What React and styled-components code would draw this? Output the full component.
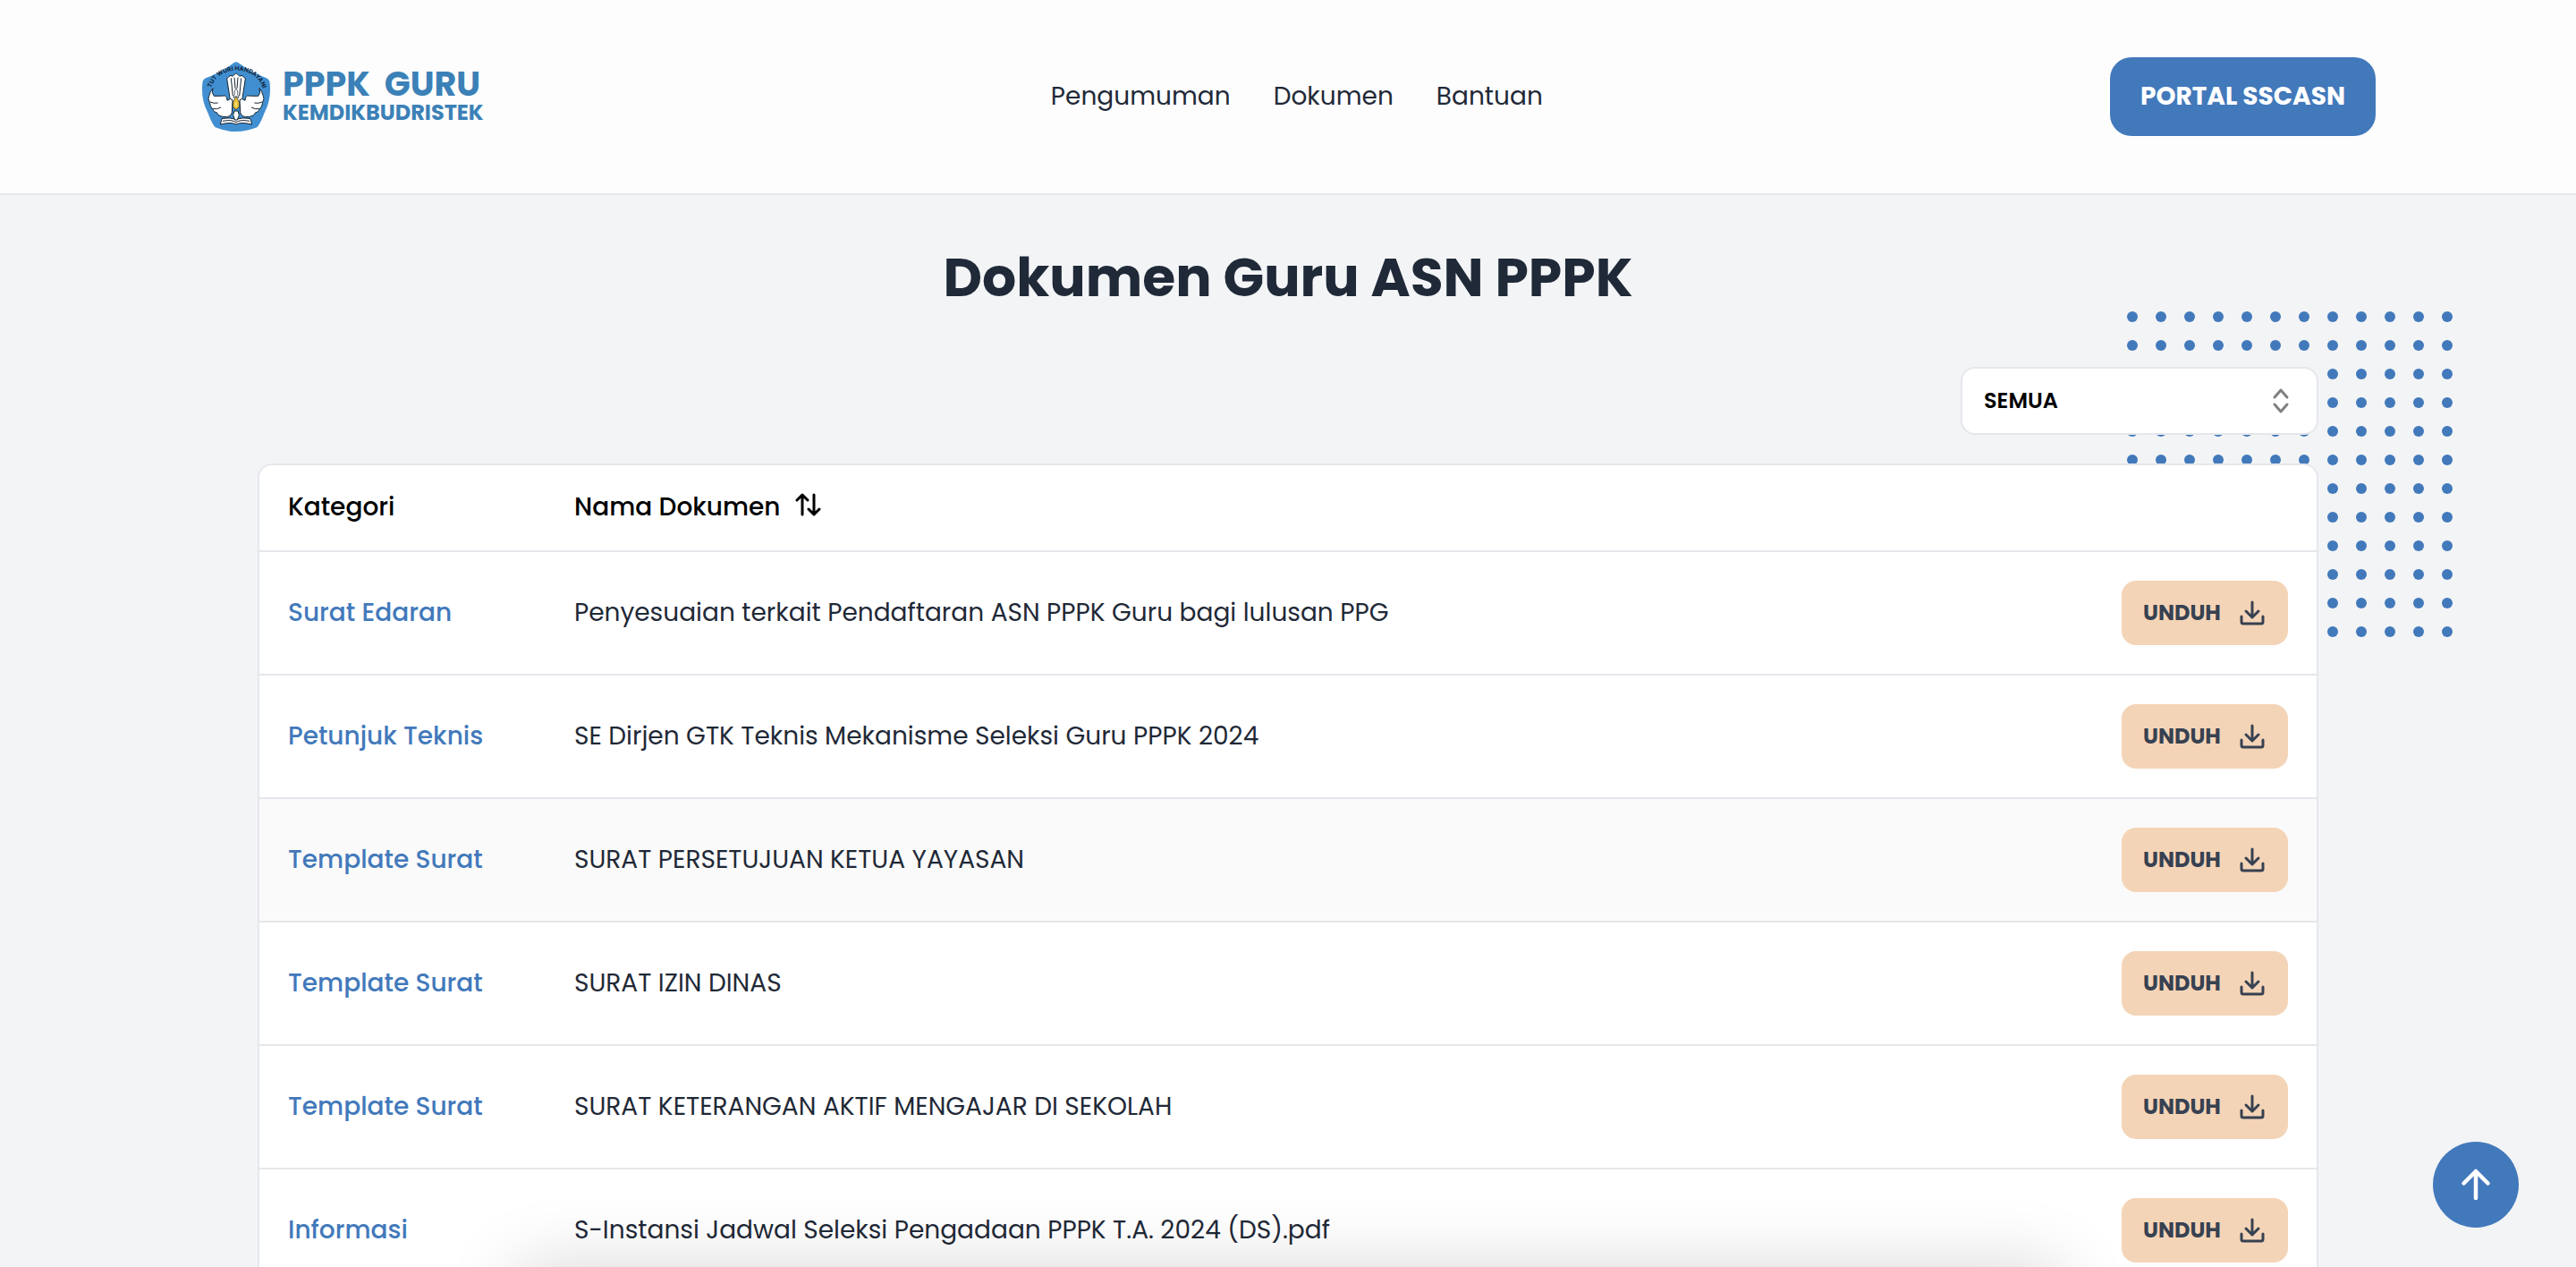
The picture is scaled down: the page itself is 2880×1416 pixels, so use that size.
import React, { useState } from 'react';
import styled, { createGlobalStyle } from 'styled-components';

const GlobalStyle = createGlobalStyle`
  * { box-sizing: border-box; }
  body {
    margin: 0;
    background: #f3f4f6;
    color: #1f2937;
    font-family: Poppins, Inter, "Liberation Sans", sans-serif;
    font-size: 28px;
    line-height: 40px;
  }
  button, select { font: inherit; }
`;

const Header = styled.header`
  display: flex;
  align-items: center;
  justify-content: space-between;
  padding: 64px 224px;
  background: #fdfdfd;
  border-bottom: 2px solid #e5e7eb;
`;

const Brand = styled.a`
  display: flex;
  align-items: center;
  gap: 12px;
  color: #3b81b7;
  text-decoration: none;
  font-weight: 700;
`;

const BrandText = styled.span`
  display: flex;
  flex-direction: column;
`;

const BrandName = styled.span`
  font-size: 38px;
  line-height: 36px;
  white-space: pre;
`;

const BrandOrg = styled.span`
  font-size: 24px;
  line-height: 28px;
`;

const Nav = styled.nav`
  display: flex;
  gap: 48px;
`;

const NavLink = styled.a`
  color: #1f2937;
  text-decoration: none;
`;

const PortalLink = styled.a`
  padding: 24px 34px;
  border-radius: 24px;
  background: #4279bb;
  color: #fff;
  font-weight: 700;
  text-decoration: none;
`;

const Main = styled.main`
  position: relative;
  padding: 56px 10% 96px;
`;

const Title = styled.h1`
  margin: 0 0 64px;
  font-size: 60px;
  line-height: 72px;
  font-weight: 700;
  text-align: center;
`;

const Dots = styled.svg`
  position: absolute;
  top: 130px;
  right: 138px;
`;

const Filter = styled.div`
  position: relative;
  width: 400px;
  margin: 0 0 32px auto;

  svg {
    position: absolute;
    top: 22px;
    right: 26px;
    pointer-events: none;
  }
`;

const Select = styled.select`
  display: block;
  width: 100%;
  height: 76px;
  padding: 0 24px;
  border: 2px solid #e5e7eb;
  border-radius: 16px;
  appearance: none;
  background: #fff;
  color: #000;
  font-size: 24px;
  font-weight: 600;
`;

const TableCard = styled.div`
  position: relative;
  overflow: hidden;
  border: 2px solid #e5e7eb;
  border-radius: 16px;
  background: #fff;
`;

const Table = styled.table`
  width: 100%;
  border-collapse: separate;
  border-spacing: 0;
  text-align: left;
`;

const HeadCell = styled.th`
  width: ${(p) => p.$width || 'auto'};
  height: 97px;
  padding: 0 32px 2px;
  border-bottom: 2px solid #e5e7eb;
  color: #000;
  font-weight: 500;
`;

const SortButton = styled.button`
  display: flex;
  align-items: center;
  gap: 16px;
  padding: 0;
  border: 0;
  background: none;
  color: inherit;
`;

const Row = styled.tr`
  background: ${(p) => (p.$active ? '#fafafa' : '#fff')};
`;

const Cell = styled.td`
  height: 138px;
  padding: 0 32px;
  border-bottom: 2px solid #e5e7eb;
  text-align: ${(p) => p.$align || 'left'};
`;

const Category = styled.span`
  color: #4279bb;
  font-weight: 500;
`;

const DownloadButton = styled.button`
  display: inline-flex;
  align-items: center;
  justify-content: space-between;
  width: 186px;
  height: 72px;
  padding: 0 24px;
  border: 0;
  border-radius: 16px;
  background: #f4d4b7;
  color: #374151;
  font-size: 24px;
  font-weight: 700;
  vertical-align: middle;
`;

const TopButton = styled.button`
  position: fixed;
  right: 64px;
  bottom: 44px;
  display: grid;
  place-items: center;
  width: 96px;
  height: 96px;
  padding: 0;
  border: 0;
  border-radius: 50%;
  background: #4279bb;
  color: #fff;
`;

const BottomShade = styled.div`
  position: fixed;
  left: 20%;
  right: 20%;
  bottom: -160px;
  height: 160px;
  box-shadow: 0 0 80px rgba(0, 0, 0, 0.16);
  pointer-events: none;
`;

const Line = ({ size = 32, weight = 2, children }) => (
  <svg
    width={size}
    height={size}
    viewBox="0 0 32 32"
    fill="none"
    stroke="currentColor"
    strokeWidth={weight}
    strokeLinecap="round"
    strokeLinejoin="round"
    aria-hidden="true"
  >
    {children}
  </svg>
);

const Emblem = () => (
  <svg width="80" height="80" viewBox="15 20 240 240" aria-hidden="true">
    <defs>
      <path id="motto" d="M49 114Q70 55 136 52Q205 55 226 116" />
    </defs>
    <path
      d="M128 26Q135 21 142 26Q186 59 237 78Q246 82 248 94Q254 150 229 196Q217 229 205 243Q170 257 135 257Q100 257 65 243Q53 229 41 196Q16 150 22 94Q24 82 33 78Q84 59 128 26Z"
      fill="#418fd1"
    />
    <text fontFamily="Inter, sans-serif" fontSize="20" fontWeight="700" fill="#10243a">
      <textPath href="#motto" startOffset="50%" textAnchor="middle">
        TUT WURI HANDAYANI
      </textPath>
    </text>
    <g fill="#fff" stroke="#172431" strokeWidth="3" strokeLinejoin="round">
      <path d="M104 80Q110 72 117 69Q124 76 129 66Q135 57 141 66Q146 76 153 69Q160 72 166 80L156 145L145 158H125L114 145Z" />
      <path d="M57 112Q51 128 61 138Q77 138 97 137Q106 140 105 153Q116 143 123 151L121 194Q118 207 104 208Q88 209 78 203Q70 198 72 195Q59 191 56 182Q47 172 46 159Q39 146 44 138Q48 122 57 112Z" />
      <path d="M213 112Q219 128 209 138Q193 138 173 137Q164 140 165 153Q154 143 147 151L149 194Q152 207 166 208Q182 209 192 203Q200 198 198 195Q211 191 214 182Q223 172 224 159Q231 146 226 138Q222 122 213 112Z" />
      <path d="M82 233L87 214Q119 208 135 218Q151 208 183 214L188 233Q151 224 135 233Q119 224 82 233Z" />
      <path d="M129 188H141L145 202L139 218H131L125 202Z" />
    </g>
    <path
      d="M118 78L124 138M129 76L132 112M141 76L138 112M152 78L146 138M48 158Q60 164 74 161M57 181Q72 183 84 176M222 158Q210 164 196 161M213 181Q198 183 186 176M90 222Q120 216 135 226Q150 216 180 222"
      fill="none"
      stroke="#172431"
      strokeWidth="3"
    />
    <path d="M135 112Q127 122 130 132L126 145L135 138L144 145L140 132Q143 122 135 112Z" fill="#fff" stroke="#172431" strokeWidth="2" />
    <path d="M135 140Q121 158 124 171Q127 182 135 183Q143 182 146 171Q149 158 135 140Z" fill="#e9c136" stroke="#172431" strokeWidth="2" />
    <path d="M135 155Q129 167 135 175Q141 167 135 155Z" fill="#f8e58a" />
  </svg>
);

const DOTS = Array.from({ length: 12 }, (_, i) => 6 + i * 32);

const DOCUMENTS = [
  ['Surat Edaran', 'Penyesuaian terkait Pendaftaran ASN PPPK Guru bagi lulusan PPG'],
  ['Petunjuk Teknis', 'SE Dirjen GTK Teknis Mekanisme Seleksi Guru PPPK 2024'],
  ['Template Surat', 'SURAT PERSETUJUAN KETUA YAYASAN'],
  ['Template Surat', 'SURAT IZIN DINAS'],
  ['Template Surat', 'SURAT KETERANGAN AKTIF MENGAJAR DI SEKOLAH'],
  ['Informasi', 'S-Instansi Jadwal Seleksi Pengadaan PPPK T.A. 2024 (DS).pdf'],
];

export default function App() {
  const [category, setCategory] = useState('SEMUA');

  return (
    <>
      <GlobalStyle />
      <Header>
        <Brand href="#">
          <Emblem />
          <BrandText>
            <BrandName>{'PPPK  GURU'}</BrandName>
            <BrandOrg>KEMDIKBUDRISTEK</BrandOrg>
          </BrandText>
        </Brand>
        <Nav>
          <NavLink href="#pengumuman">Pengumuman</NavLink>
          <NavLink href="#dokumen">Dokumen</NavLink>
          <NavLink href="#bantuan">Bantuan</NavLink>
        </Nav>
        <PortalLink href="#portal">PORTAL SSCASN</PortalLink>
      </Header>

      <Main>
        <Dots width="364" height="364" fill="#4279bb" aria-hidden="true">
          {DOTS.map((y) => DOTS.map((x) => <circle key={`${x}-${y}`} cx={x} cy={y} r="6" />))}
        </Dots>
        <Title>Dokumen Guru ASN PPPK</Title>
        <Filter>
          <Select aria-label="Kategori" value={category} onChange={(e) => setCategory(e.target.value)}>
            <option>SEMUA</option>
          </Select>
          <svg width="32" height="32" viewBox="0 0 32 32" fill="none" stroke="#808080" strokeWidth="3" strokeLinecap="round" strokeLinejoin="round" aria-hidden="true">
            <path d="M9 12l7-8 7 8M9 20l7 8 7-8" />
          </svg>
        </Filter>
        <TableCard>
          <Table>
            <thead>
              <tr>
                <HeadCell $width="320px">Kategori</HeadCell>
                <HeadCell>
                  <SortButton type="button">
                    Nama Dokumen
                    <Line weight={3}>
                      <path d="M9 24V2M3 8l6-6 6 6M22 2v22M16 18l6 6 6-6" />
                    </Line>
                  </SortButton>
                </HeadCell>
                <HeadCell $width="250px" aria-label="Unduh" />
              </tr>
            </thead>
            <tbody>
              {DOCUMENTS.map(([kind, name], i) => (
                <Row key={name} $active={i === 2}>
                  <Cell><Category>{kind}</Category></Cell>
                  <Cell>{name}</Cell>
                  <Cell $align="right">
                    <DownloadButton type="button">
                      UNDUH
                      <Line weight={3}>
                        <path d="M16 4v17M9 14l7 7 7-7M4 20v6q0 2 2 2h20q2 0 2-2v-6" />
                      </Line>
                    </DownloadButton>
                  </Cell>
                </Row>
              ))}
            </tbody>
          </Table>
        </TableCard>
      </Main>

      <BottomShade />
      <TopButton type="button" aria-label="Kembali ke atas">
        <Line size={48} weight={3}>
          <path d="M16 26V6M7 15l9-9 9 9" />
        </Line>
      </TopButton>
    </>
  );
}
